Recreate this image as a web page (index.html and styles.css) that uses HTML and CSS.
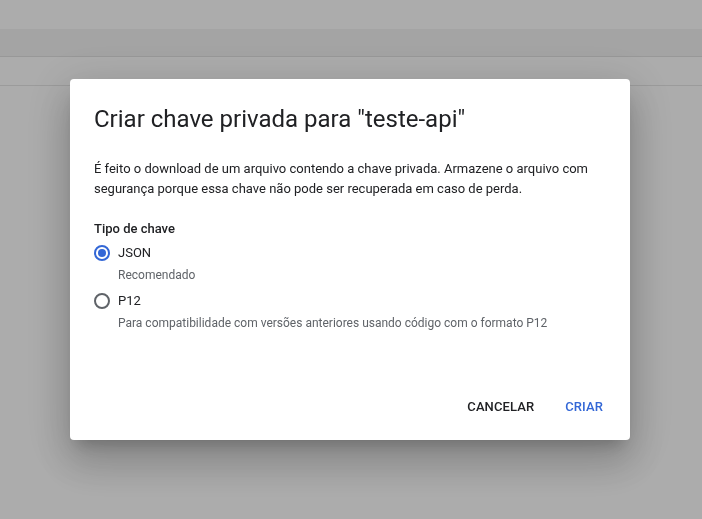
FILE: index.html
```html
<!DOCTYPE html>
<html lang="pt-BR">
<head>
<meta charset="utf-8">
<link rel="stylesheet" href="styles.css">
</head>
<body>
<div class="page">
  <div class="topbar"></div>
  <div class="toolbar"></div>
  <div class="subbar"></div>
  <div class="content"></div>
</div>
<div class="overlay">
  <div class="dialog">
    <h1 class="title">Criar chave privada para "teste-api"</h1>
    <p class="desc">É feito o download de um arquivo contendo a chave privada. Armazene o arquivo com segurança porque essa chave não pode ser recuperada em caso de perda.</p>
    <div class="group-label">Tipo de chave</div>
    <div class="options">
      <div class="option">
        <div class="radio-row">
          <span class="radio checked"></span>
          <span class="opt-label">JSON</span>
        </div>
        <div class="hint">Recomendado</div>
      </div>
      <div class="option">
        <div class="radio-row">
          <span class="radio"></span>
          <span class="opt-label">P12</span>
        </div>
        <div class="hint">Para compatibilidade com versões anteriores usando código com o formato P12</div>
      </div>
    </div>
    <div class="actions">
      <button class="btn">CANCELAR</button>
      <button class="btn primary">CRIAR</button>
    </div>
  </div>
</div>
</body>
</html>
```
FILE: styles.css
```css
* { box-sizing: border-box; }
html, body { margin: 0; padding: 0; height: 100%; }
body {
  font-family: Roboto, "Liberation Sans", Arial, sans-serif;
  background: #fff;
  overflow: hidden;
}
.page { display: flex; flex-direction: column; height: 100%; }
.topbar { height: 29px; background: #ffffff; }
.toolbar { height: 28px; background: #f4f4f4; border-bottom: 1px solid #e2e2e2; }
.subbar { height: 29px; background: #ffffff; border-bottom: 1px solid #e6e6e6; }
.content { flex: 1; background: #fff; }

.overlay {
  position: fixed;
  inset: 0;
  background: rgba(0, 0, 0, 0.325);
  display: flex;
  align-items: center;
  justify-content: center;
  padding-right: 2px;
}
.dialog {
  width: 560px;
  height: 361px;
  background: #fff;
  border-radius: 4px;
  box-shadow: 0 11px 15px -7px rgba(0,0,0,.2), 0 24px 38px 3px rgba(0,0,0,.14), 0 9px 46px 8px rgba(0,0,0,.12);
  padding: 24px 24px 0;
  display: flex;
  flex-direction: column;
  color: #202124;
}
.title {
  margin: 0;
  font-size: 24px;
  font-weight: 400;
  line-height: 32px;
  color: #202124;
}
.desc {
  margin: 24px 0 0;
  font-size: 13px;
  line-height: 20px;
  color: #202124;
}
.group-label {
  margin-top: 20px;
  font-size: 13px;
  font-weight: 500;
  line-height: 20px;
}
.options { display: flex; flex-direction: column; gap: 6px; margin-top: 4px; }
.radio-row { display: flex; align-items: center; gap: 8px; height: 20px; }
.radio {
  width: 16px;
  height: 16px;
  border: 2px solid #5f6368;
  border-radius: 50%;
  display: flex;
  align-items: center;
  justify-content: center;
}
.radio.checked { border-color: #3367d6; }
.radio.checked::after {
  content: "";
  width: 8px;
  height: 8px;
  border-radius: 50%;
  background: #3367d6;
}
.opt-label { font-size: 13px; line-height: 20px; }
.hint {
  margin: 2px 0 0 24px;
  font-size: 12px;
  line-height: 20px;
  color: #5f6368;
}
.actions {
  margin-top: auto;
  margin-right: -5px;
  display: flex;
  justify-content: flex-end;
  gap: 15px;
  padding: 0 0 16px 0;
}
.btn {
  background: none;
  border: none;
  font-family: inherit;
  font-size: 13px;
  font-weight: 500;
  letter-spacing: 0.1px;
  color: #202124;
  padding: 0 8px;
  height: 36px;
  cursor: pointer;
}
.btn.primary { color: #3367d6; }
```
